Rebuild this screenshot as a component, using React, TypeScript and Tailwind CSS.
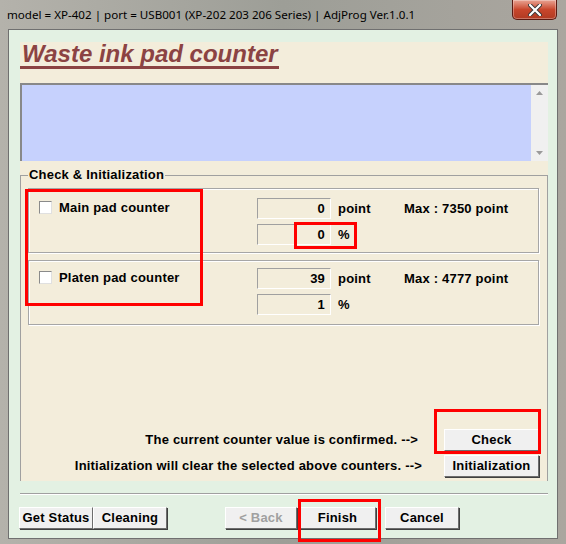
import React from 'react';

const sunken = 'border border-t-[#a0a0a0] border-l-[#a0a0a0] border-b-white border-r-white';
const raised = 'border border-t-white border-l-white border-b-[#6d6d6d] border-r-[#6d6d6d] bg-[#f0f0f0] shadow-[1px_1px_0_#404040]';

function ValueBox({ value }: { value: string }) {
  return (
    <div className={`w-[74px] h-[21px] ${sunken} flex items-center justify-end pr-[5px] text-[13px] font-bold`}>
      {value}
    </div>
  );
}

function Checkbox() {
  return <div className="w-[13px] h-[13px] bg-white border border-t-[#8a8a8a] border-l-[#8a8a8a] border-b-[#e0e0e0] border-r-[#e0e0e0]" />;
}

function CounterBox({ label, point, pct, max, pt }: { label: string; point: string; pct: string; max: string; pt: string }) {
  return (
    <div className={`h-[65px] border border-[#a6a6a6] shadow-[inset_1px_1px_0_white,1px_1px_0_white] flex ${pt}`}>
      <div className="w-[228px] flex items-start pl-[10px] pt-[2px] gap-[7px]">
        <div className="pt-[1px]"><Checkbox /></div>
        <span className="text-[13px] font-bold leading-[16px]">{label}</span>
      </div>
      <div className="flex flex-col gap-[5px]">
        <div className="flex items-center">
          <ValueBox value={point} />
          <span className="ml-[7px] w-[66px] text-[13px] font-bold">point</span>
          <span className="text-[13px] font-bold">Max : {max} point</span>
        </div>
        <div className="flex items-center">
          <ValueBox value={pct} />
          <span className="ml-[7px] text-[13px] font-bold">%</span>
        </div>
      </div>
    </div>
  );
}

function Btn({ children, w, disabled }: { children: React.ReactNode; w: string; disabled?: boolean }) {
  return (
    <div className={`${w} h-[22px] ${raised} flex items-center justify-center text-[13px] font-bold ${disabled ? 'text-[#a0a0a0]' : 'text-black'}`}>
      {children}
    </div>
  );
}

export default function App() {
  return (
    <div
      className="relative w-[566px] h-[544px] overflow-hidden flex flex-col px-[8px] pb-[5px] bg-gradient-to-r from-[#b4b2ab] via-[#9d9e97] to-[#aaa69f] tracking-[0.2px]"
      style={{ fontFamily: '"Liberation Sans", Arial, sans-serif' }}
    >
      {/* Title bar */}
      <div className="h-[29px] flex items-start justify-between shrink-0 tracking-normal">
        <span className="pt-[6px] -ml-[1px] text-black" style={{ fontFamily: '"Noto Sans", "Liberation Sans", sans-serif', fontSize: '11.6px' }}>
          model = XP-402 | port = USB001 (XP-202 203 206 Series) | AdjProg Ver.1.0.1
        </span>
        <div className="mr-[1px] w-[45px] h-[20px] rounded-b-[5px] border border-t-0 border-[#5b1a12] bg-gradient-to-b from-[#e8a393] via-[#c8462c] to-[#b03a22] flex items-center justify-center shadow-[inset_0_0_0_1px_rgba(255,255,255,0.3)]">
          <svg width="14" height="12" viewBox="0 0 14 12">
            <path d="M2 1 L12 11 M12 1 L2 11" stroke="#3a3a3a" strokeWidth="4" strokeLinecap="round" />
            <path d="M2 1 L12 11 M12 1 L2 11" stroke="white" strokeWidth="2.2" strokeLinecap="round" />
          </svg>
        </div>
      </div>

      {/* Client area */}
      <div className="flex-1 bg-[#e3f1e3] border border-[#707070] flex flex-col pl-[11px] pr-[9px]">
        <div className="mt-[12px] h-[439px] bg-[#f3eddb] flex flex-col">
          <div className="h-[41px] pt-[1px] flex items-start">
            <span className="inline-block pl-[2px] pr-[1px] pb-[1px] border-b-[3px] border-[#8b4343] text-[24px] font-bold italic tracking-normal text-[#8b4343] leading-[22px]">
              Waste ink pad counter
            </span>
          </div>

          {/* Log area */}
          <div className="h-[78px] bg-[#c6d1fd] border-t-2 border-l-2 border-[#888] flex justify-end">
            <div className="w-[17px] bg-[#f0f0f0] flex flex-col items-center justify-between py-[6px]">
              <svg width="7" height="4" viewBox="0 0 7 4"><path d="M3.5 0 L7 4 L0 4 Z" fill="#9a9a9a" /></svg>
              <svg width="7" height="4" viewBox="0 0 7 4"><path d="M0 0 L7 0 L3.5 4 Z" fill="#9a9a9a" /></svg>
            </div>
          </div>

          {/* Group box */}
          <div className="relative mt-[14px] flex-1 border-l border-t border-r border-[#a0a0a0] px-[7px] pt-[12px] flex flex-col">
            <span className="absolute -top-[9px] left-[7px] px-[1px] bg-[#f3eddb] text-[13px] font-bold leading-[16px] text-black">
              Check &amp; Initialization
            </span>
            <div className="flex flex-col gap-[7px] pr-[1px]">
              <CounterBox label="Main pad counter" point="0" pct="0" max="7350" pt="pt-[9px]" />
              <CounterBox label="Platen pad counter" point="39" pct="1" max="4777" pt="pt-[7px]" />
            </div>

            <div className="mt-auto mb-[4px] flex flex-col gap-[4px] pr-[1px]">
              <div className="flex items-center justify-end gap-[26px]">
                <span className="text-[13px] font-bold">The current counter value is confirmed. --&gt;</span>
                <Btn w="w-[95px]">Check</Btn>
              </div>
              <div className="flex items-center justify-end gap-[22px]">
                <span className="text-[13px] font-bold">Initialization will clear the selected above counters. --&gt;</span>
                <Btn w="w-[95px]">Initialization</Btn>
              </div>
            </div>
          </div>
        </div>

        {/* Separator */}
        <div className="mt-[12px] h-[2px] border-t border-[#a0a0a0] border-b border-b-white" />

        {/* Bottom buttons */}
        <div className="mt-[12px] flex items-center -ml-[1px]">
          <Btn w="w-[74px]">Get Status</Btn>
          <Btn w="w-[74px]">Cleaning</Btn>
          <div className="w-[58px]" />
          <Btn w="w-[72px]" disabled>&lt; Back</Btn>
          <div className="w-[2px]" />
          <Btn w="w-[77px]">Finish</Btn>
          <div className="w-[9px]" />
          <Btn w="w-[74px]">Cancel</Btn>
        </div>
      </div>

      {/* Red annotation boxes */}
      <div className="absolute left-[25px] top-[189px] w-[178px] h-[117px] border-[3px] border-[#ff0000]" />
      <div className="absolute left-[294px] top-[222px] w-[63px] h-[27px] border-[3px] border-[#ff0000]" />
      <div className="absolute left-[434px] top-[409px] w-[107px] h-[45px] border-[3px] border-[#ff0000]" />
      <div className="absolute left-[298px] top-[499px] w-[83px] h-[43px] border-[3px] border-[#ff0000]" />
    </div>
  );
}
